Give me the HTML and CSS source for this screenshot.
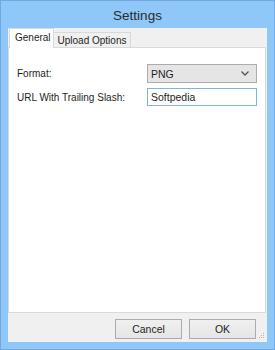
FILE: index.html
```html
<!DOCTYPE html>
<html>
<head>
<meta charset="utf-8">
<link rel="stylesheet" href="styles.css">
</head>
<body>
<div class="window">
  <div class="titlebar">Settings</div>
  <div class="client">
    <div class="tabs">
      <div class="tab active">General</div>
      <div class="tab">Upload Options</div>
    </div>
    <div class="panel">
      <div class="form">
        <label class="lbl">Format:</label>
        <div class="select"><span>PNG</span>
          <svg class="chev" width="8" height="5" viewBox="0 0 8 5"><path d="M0.5 0.5 L4 4 L7.5 0.5" fill="none" stroke="#555" stroke-width="1.3"/></svg>
        </div>
        <label class="lbl">URL With Trailing Slash:</label>
        <div class="input">Softpedia</div>
      </div>
    </div>
    <div class="footer">
      <button class="btn">Cancel</button>
      <button class="btn">OK</button>
      <svg class="grip" width="6" height="6" viewBox="0 0 6 6">
        <rect x="4" y="0" width="1" height="1" fill="#b8b8b8"/>
        <rect x="2" y="2" width="1" height="1" fill="#b8b8b8"/>
        <rect x="4" y="2" width="1" height="1" fill="#b8b8b8"/>
        <rect x="0" y="4" width="1" height="1" fill="#b8b8b8"/>
        <rect x="2" y="4" width="1" height="1" fill="#b8b8b8"/>
        <rect x="4" y="4" width="1" height="1" fill="#b8b8b8"/>
      </svg>
    </div>
  </div>
</div>
</body>
</html>
```
FILE: styles.css
```css
* { box-sizing: border-box; }
html, body { margin: 0; padding: 0; }
body {
  width: 275px;
  height: 350px;
  font-family: "Liberation Sans", Arial, sans-serif;
  font-size: 10px;
  color: #1e1e1e;
  overflow: hidden;
}
.window {
  width: 275px;
  height: 350px;
  background: #8ec7f8;
  border: 1px solid #70a9df;
  display: flex;
  flex-direction: column;
}
.titlebar {
  height: 27px;
  display: flex;
  align-items: center;
  justify-content: center;
  font-size: 13.5px;
  color: #2b2b2b;
  padding-top: 1px;
}
.client {
  flex: 1;
  margin: 0 7px 7px 7px;
  background: #f0f0f0;
  display: flex;
  flex-direction: column;
  padding: 0 1px 0 0;
}
.tabs {
  height: 19px;
  display: flex;
  align-items: flex-end;
  padding-left: 1px;
}
.tab {
  height: 15px;
  padding: 0;
  border: 1px solid #d9d9d9;
  border-bottom: none;
  background: #f0f0f0;
  display: flex;
  align-items: center;
  width: 78px;
  justify-content: center;
  white-space: nowrap;
  margin-left: -1px;
}
.tab.active {
  height: 20px;
  width: 45px;
  background: #fff;
  position: relative;
  z-index: 1;
  margin-bottom: -1px;
  margin-left: 0;
  padding-bottom: 3px;
  padding-left: 5px;
  justify-content: flex-start;
}
.panel {
  flex: 1;
  background: #fff;
  border: 1px solid #d9d9d9;
  padding: 16px 0 0 8px;
}
.form {
  display: grid;
  grid-template-columns: 130px 110px;
  row-gap: 5px;
  align-items: center;
}
.lbl {
  color: #1e1e1e;
}
.select {
  height: 19px;
  background: #e5e5e5;
  border: 1px solid #acacac;
  display: flex;
  align-items: center;
  justify-content: space-between;
  padding: 0 7px 0 3px;
  font-size: 10.5px;
}
.chev { display: block; }
.input {
  height: 18px;
  width: 110px;
  background: #fff;
  border: 1px solid #7eb4ea;
  display: flex;
  align-items: center;
  padding: 0 3px;
  font-size: 10.5px;
}
.footer {
  height: 29px;
  display: flex;
  align-items: flex-start;
  justify-content: flex-end;
  padding: 6px 10px 0 0;
  gap: 7px;
  position: relative;
}
.btn {
  width: 67px;
  height: 20px;
  margin: 0;
  padding: 0;
  border: 1px solid #acacac;
  background: linear-gradient(#f0f0f0, #e5e5e5);
  font-family: "Liberation Sans", Arial, sans-serif;
  font-size: 10.5px;
  color: #1e1e1e;
}
.grip {
  position: absolute;
  right: 1px;
  bottom: 3px;
}
```
